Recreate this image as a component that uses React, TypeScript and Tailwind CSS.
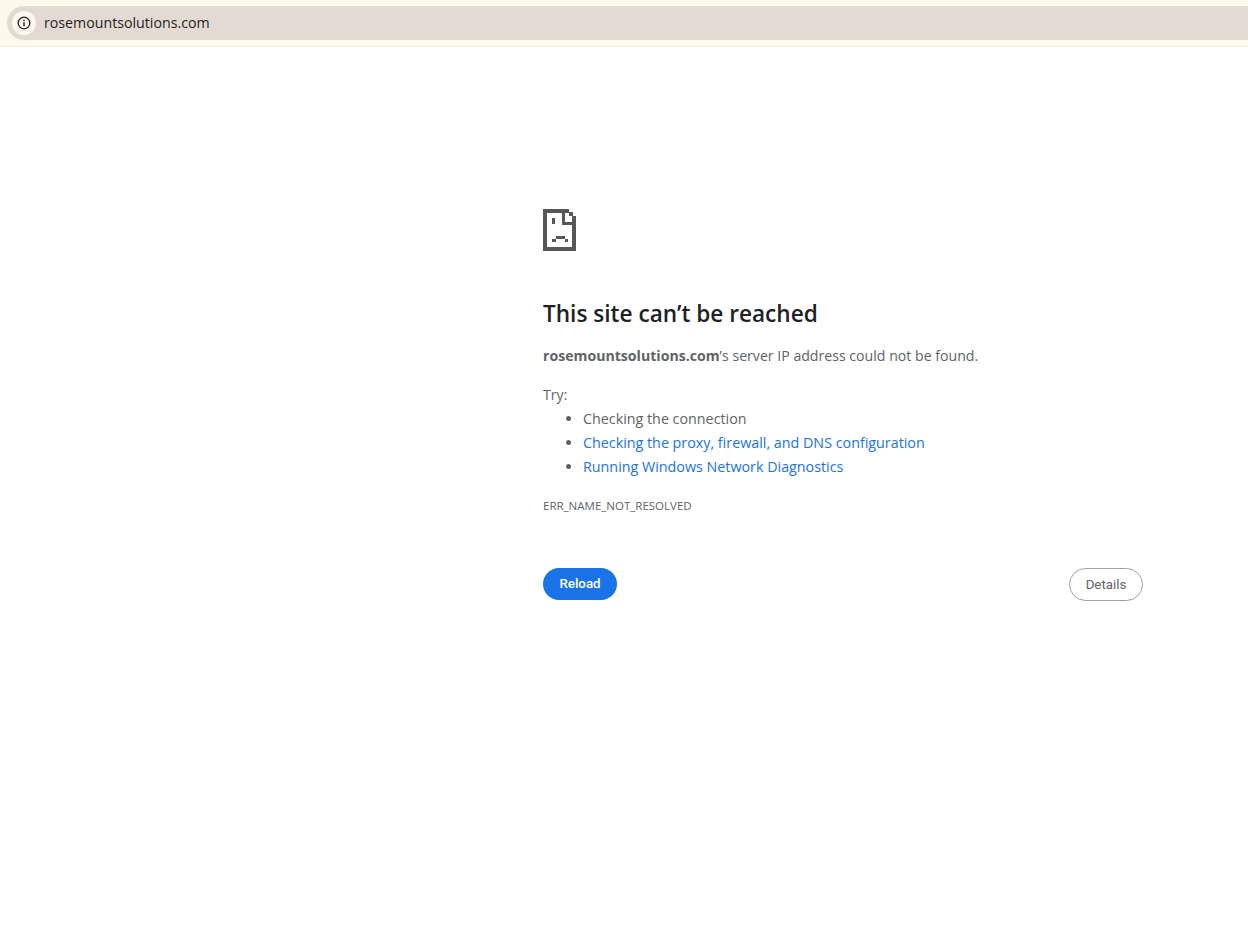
const font = "font-['Open_Sans','Noto_Sans',sans-serif]"

function SadTab() {
  return (
    <svg width="33" height="42" viewBox="0 0 33 42" fill="#555759" shapeRendering="crispEdges" className="block">
      <rect x="0" y="0" width="4" height="42" />
      <rect x="0" y="0" width="26" height="4" />
      <rect x="0" y="38" width="33" height="4" />
      <rect x="29" y="7" width="4" height="35" />
      <rect x="26" y="3" width="4" height="4" />
      <rect x="19" y="0" width="3" height="16" />
      <rect x="19" y="13" width="14" height="3" />
      <rect x="9" y="9" width="3" height="6" />
      <rect x="13" y="27" width="9" height="3" />
      <rect x="9" y="30" width="4" height="3" />
      <rect x="22" y="30" width="3" height="3" />
    </svg>
  )
}

function InfoIcon() {
  return (
    <svg width="14" height="14" viewBox="0 0 14 14" fill="none">
      <circle cx="7" cy="7" r="5.8" stroke="#1f1f1f" strokeWidth="1.3" />
      <rect x="6.3" y="6.2" width="1.4" height="4" fill="#1f1f1f" />
      <rect x="6.3" y="3.8" width="1.4" height="1.4" fill="#1f1f1f" />
    </svg>
  )
}

export default function App() {
  return (
    <div className={`min-h-[933px] bg-white ${font}`}>
      <div className="h-[47px] bg-[#fff8ec] border-b border-[#f5ebdc] pt-[6px] pl-[7px]">
        <div className="h-[34px] bg-[#e3dbd3] rounded-l-[17px] flex items-center pl-[5px]">
          <div className="w-[24px] h-[24px] rounded-full bg-[#fff8ec] flex items-center justify-center">
            <InfoIcon />
          </div>
          <span className="ml-[8px] mb-[1px] text-[14.2px] text-[#1f1f1f]">rosemountsolutions.com</span>
        </div>
      </div>

      <div className="w-[600px] ml-[543px] pt-[162px]">
        <SadTab />
        <h1 className="mt-[46px] text-[22.6px] leading-[34px] font-semibold text-[#202124]">This site can’t be reached</h1>
        <p className="mt-[13px] text-[14.14px] leading-[24px] text-[#5f6368]">
          <span className="font-bold">rosemountsolutions.com</span>’s server IP address could not be found.
        </p>
        <p className="mt-[15px] text-[14.14px] leading-[24px] text-[#5f6368]">Try:</p>
        <ul className="list-disc pl-[40px] text-[14.3px] leading-[24px] text-[#5f6368]">
          <li>Checking the connection</li>
          <li><a className="text-[#1a73e8]">Checking the proxy, firewall, and DNS configuration</a></li>
          <li><a className="text-[#1a73e8]">Running Windows Network Diagnostics</a></li>
        </ul>
        <p className="mt-[15px] text-[11.5px] leading-[24px] text-[#5f6368]">ERR_NAME_NOT_RESOLVED</p>
        <div className="mt-[50px] flex justify-between items-start">
          <button className="h-[32px] w-[74px] rounded-full bg-[#1a73e8] text-white text-[13.3px] font-medium font-['Roboto',sans-serif]">Reload</button>
          <button className="h-[33px] w-[74px] rounded-full border border-[#9aa0a6] bg-white text-[#5f6368] text-[13.3px] font-['Roboto',sans-serif]">Details</button>
        </div>
      </div>
    </div>
  )
}
